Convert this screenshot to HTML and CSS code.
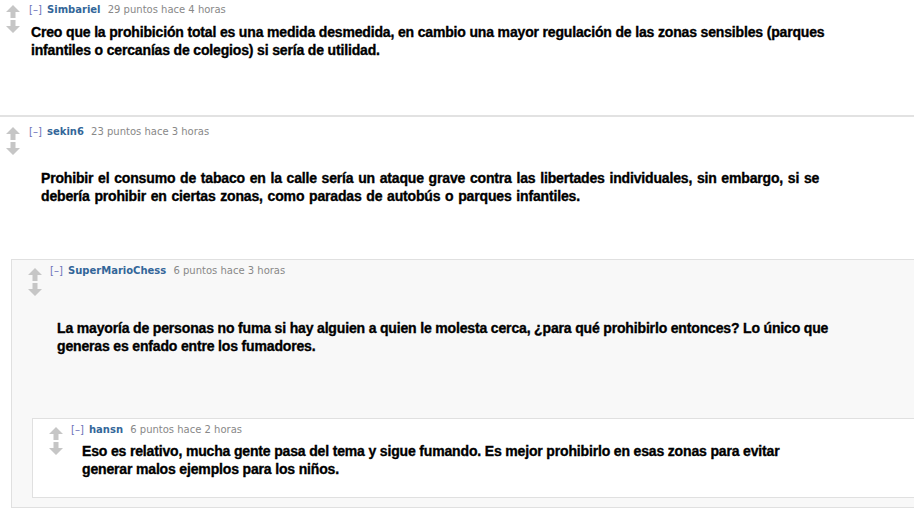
FILE: index.html
```html
<!DOCTYPE html>
<html>
<head>
<meta charset="utf-8">
<link rel="stylesheet" href="styles.css">
</head>
<body>
<svg width="0" height="0" class="defs">
  <defs>
    <symbol id="arrows" viewBox="0 0 16 28">
      <path d="M8 0 L15 7 L10.5 7 L10.5 13 L5.5 13 L5.5 7 L1 7 Z" fill="#c6c6c6"/>
      <path d="M5.5 15 L10.5 15 L10.5 21 L15 21 L8 28 L1 21 L5.5 21 Z" fill="#c6c6c6"/>
    </symbol>
  </defs>
</svg>

<div class="comment c1">
  <div class="midcol"><svg class="arrows"><use href="#arrows"/></svg></div>
  <div class="entry">
    <p class="tagline"><span class="expand">[–]</span> <span class="author">Simbariel</span> <span class="score">29 puntos hace 4 horas</span></p>
    <div class="md">Creo que la prohibición total es una medida desmedida, en cambio una mayor regulación de las zonas sensibles (parques infantiles o cercanías de colegios) si sería de utilidad.</div>
  </div>
</div>

<div class="comment c2">
  <div class="top">
    <div class="midcol"><svg class="arrows"><use href="#arrows"/></svg></div>
    <div class="entry">
      <p class="tagline"><span class="expand">[–]</span> <span class="author">sekin6</span> <span class="score">23 puntos hace 3 horas</span></p>
      <div class="md">Prohibir el consumo de tabaco en la calle sería un ataque grave contra las libertades individuales, sin embargo, si se debería prohibir en ciertas zonas, como paradas de autobús o parques infantiles.</div>
    </div>
  </div>

  <div class="child c3">
    <div class="top">
      <div class="midcol"><svg class="arrows"><use href="#arrows"/></svg></div>
      <div class="entry">
        <p class="tagline"><span class="expand">[–]</span> <span class="author">SuperMarioChess</span> <span class="score">6 puntos hace 3 horas</span></p>
        <div class="md">La mayoría de personas no fuma si hay alguien a quien le molesta cerca, ¿para qué prohibirlo entonces? Lo único que generas es enfado entre los fumadores.</div>
      </div>
    </div>

    <div class="child c4">
      <div class="top">
        <div class="midcol"><svg class="arrows"><use href="#arrows"/></svg></div>
        <div class="entry">
          <p class="tagline"><span class="expand">[–]</span> <span class="author">hansn</span> <span class="score">6 puntos hace 2 horas</span></p>
          <div class="md">Eso es relativo, mucha gente pasa del tema y sigue fumando. Es mejor prohibirlo en esas zonas para evitar generar malos ejemplos para los niños.</div>
        </div>
      </div>
    </div>
  </div>
</div>
</body>
</html>
```

FILE: styles.css
```css
html, body {
  margin: 0;
  padding: 0;
  background: #fff;
  overflow: hidden;
}
body {
  font-family: "DejaVu Sans", Verdana, sans-serif;
  width: 914px;
  height: 512px;
}
.defs {
  position: absolute;
  width: 0;
  height: 0;
}
.comment, .top {
  display: flex;
}
.comment.c2 {
  flex-direction: column;
}
.midcol {
  flex: none;
}
.arrows {
  display: block;
  width: 16px;
  height: 28px;
}
.entry {
  flex: 1;
  min-width: 0;
}
.tagline {
  margin: 0;
  font-size: 10px;
  line-height: 12px;
  color: #888;
  white-space: nowrap;
}
.expand {
  color: #6b70b8;
  margin-right: 2px;
}
.author {
  color: #336699;
  font-weight: bold;
  margin-right: 4px;
}
.md {
  font-family: "Liberation Sans", Arial, sans-serif;
  font-weight: bold;
  font-size: 14px;
  line-height: 18px;
  letter-spacing: -0.16px;
  -webkit-text-stroke: 0.35px #000;
  color: #000;
}

/* comment 1 */
.c1 {
  height: 117px;
  border-bottom: 2px solid #e2e2e2;
  padding-top: 4px;
  box-sizing: border-box;
}
.c1 .midcol {
  width: 24px;
  padding-left: 5px;
  padding-top: 1px;
}
.c1 .md {
  margin-top: 7px;
  padding-left: 2px;
  width: 820px;
}

/* comment 2 */
.c2 {
  padding-top: 9px;
}
.c2 > .top .midcol {
  width: 24px;
  padding-left: 5px;
  padding-top: 1px;
}
.c2 > .top .md {
  margin-top: 31px;
  padding-left: 12px;
  width: 810px;
  word-spacing: 1px;
}

/* nested children */
.child {
  border: 1px solid #e0e0e0;
  margin-right: -20px;
}
.c3 {
  margin-top: 54px;
  margin-left: 11px;
  background: #f8f8f8;
  padding-top: 5px;
  padding-bottom: 9px;
}
.c3 > .top .midcol {
  width: 23px;
  padding-left: 15px;
  padding-top: 3px;
}
.c3 > .top .md {
  margin-top: 42px;
  padding-left: 7px;
  width: 790px;
}
.c4 {
  margin-top: 63px;
  margin-left: 20px;
  background: #fff;
  padding-top: 5px;
  height: 80px;
  box-sizing: border-box;
}
.c4 > .top .midcol {
  width: 23px;
  padding-left: 15px;
  padding-top: 3px;
}
.c4 > .top .md {
  margin-top: 6px;
  padding-left: 11px;
  width: 740px;
}
```
